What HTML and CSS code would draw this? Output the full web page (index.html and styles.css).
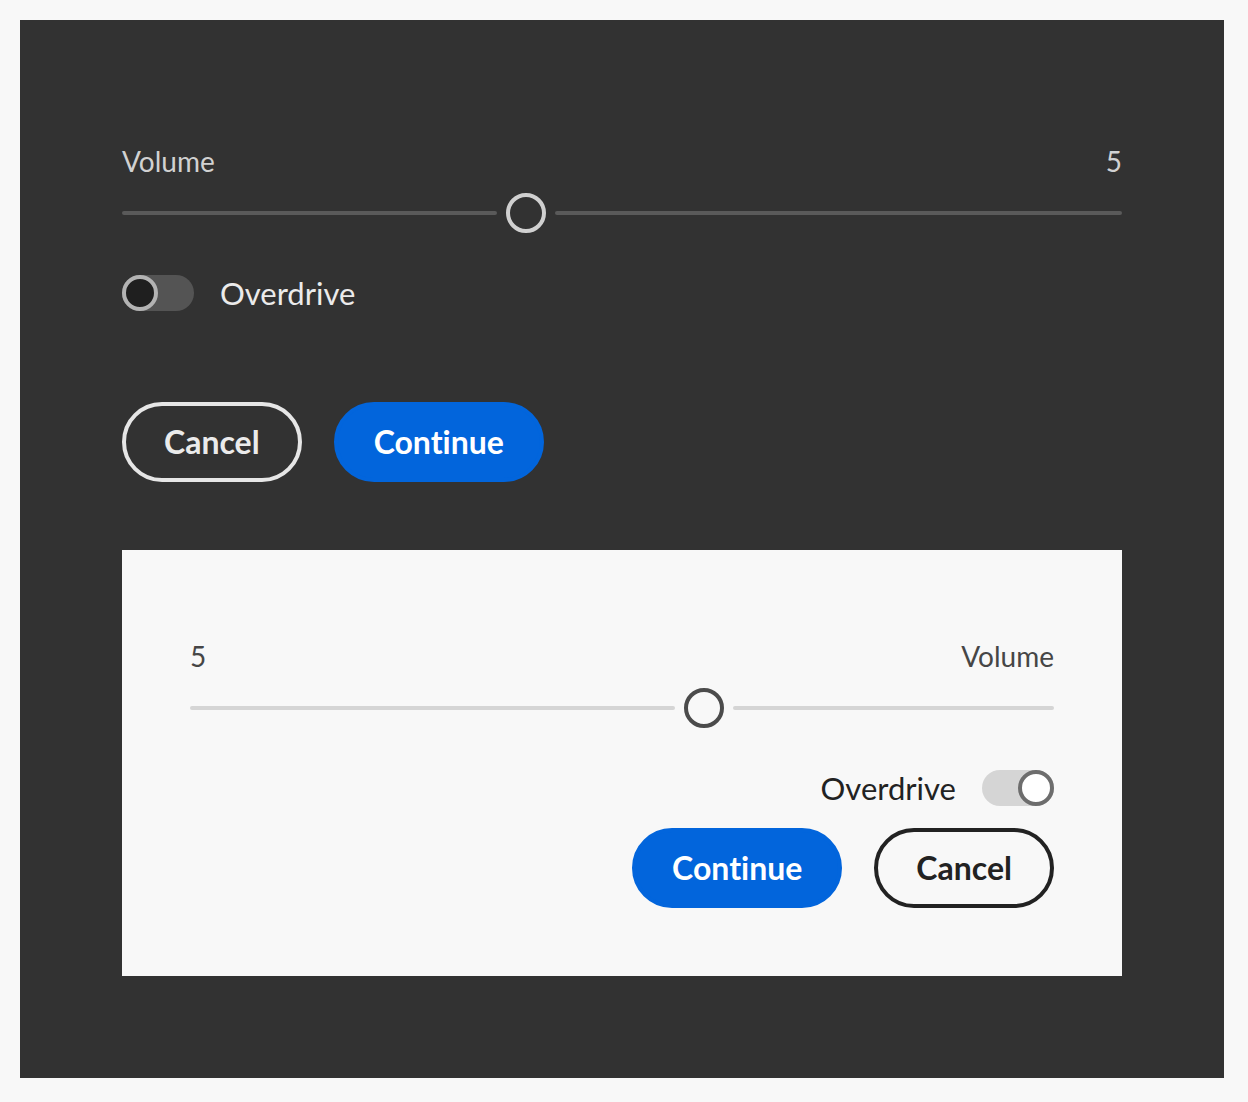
FILE: index.html
```html
<!DOCTYPE html>
<html lang="en">
<head>
<meta charset="utf-8">
<title>Volume settings</title>
<link rel="stylesheet" href="styles.css">
</head>
<body>
<main class="stage dark">
  <section class="panel">
    <div class="slider" style="--v:0.4">
      <div class="slider-labels">
        <span class="slider-label">Volume</span>
        <span class="slider-value">5</span>
      </div>
      <div class="slider-track">
        <span class="track track-fill"></span>
        <span class="thumb"></span>
        <span class="track track-rest"></span>
      </div>
    </div>
    <label class="switch">
      <span class="switch-track"><span class="switch-thumb"></span></span>
      <span class="switch-label">Overdrive</span>
    </label>
    <div class="actions actions-spaced">
      <button class="btn btn-secondary">Cancel</button>
      <button class="btn btn-accent">Continue</button>
    </div>
  </section>

  <section class="panel light" dir="rtl">
    <div class="slider" style="--v:0.4">
      <div class="slider-labels">
        <span class="slider-label">Volume</span>
        <span class="slider-value">5</span>
      </div>
      <div class="slider-track">
        <span class="track track-fill"></span>
        <span class="thumb"></span>
        <span class="track track-rest"></span>
      </div>
    </div>
    <label class="switch">
      <span class="switch-track"><span class="switch-thumb"></span></span>
      <span class="switch-label">Overdrive</span>
    </label>
    <div class="actions">
      <button class="btn btn-secondary">Cancel</button>
      <button class="btn btn-accent">Continue</button>
    </div>
  </section>
</main>
</body>
</html>
```

FILE: styles.css
```css
* { box-sizing: border-box; }

html, body {
  margin: 0;
  background: #f8f8f8;
}

body {
  padding: 20px 24px 24px 20px;
  font-family: Lato, "Open Sans", "Liberation Sans", sans-serif;
  font-variant-ligatures: none;
}

.stage {
  width: 1204px;
  padding: 102px;
  background: #323232;
}

.panel {
  display: flex;
  flex-direction: column;
}

/* ---------- slider ---------- */
.slider-labels {
  display: flex;
  justify-content: space-between;
  padding-top: 21px;
  font-size: 28px;
  line-height: 36px;
  color: #d1d1d1;
}

.slider-track {
  display: flex;
  align-items: center;
  height: 40px;
  margin-top: 14px;
}

.track {
  height: 4px;
  border-radius: 2px;
  background: #5a5a5a;
}

.track-fill {
  flex: none;
  width: calc((100% - 40px) * var(--v) - 9px);
}

.track-rest { flex: 1; }

.thumb {
  flex: none;
  width: 40px;
  height: 40px;
  margin: 0 9px;
  border-radius: 50%;
  border: 4px solid #d0d0d0;
  background: #323232;
}

/* ---------- switch ---------- */
.switch {
  display: flex;
  align-items: center;
  gap: 26px;
  margin-top: 42px;
  height: 36px;
}

.switch-track {
  display: flex;
  width: 72px;
  height: 36px;
  border-radius: 18px;
  background: #545454;
}

.switch-thumb {
  width: 36px;
  height: 36px;
  border-radius: 50%;
  border: 4px solid #b3b3b3;
  background: #1f1f1f;
}

.switch-label {
  font-size: 31px;
  line-height: 36px;
  color: #ebebeb;
}

/* ---------- buttons ---------- */
.actions {
  display: flex;
  gap: 32px;
  margin-top: 22px;
}

.actions-spaced { margin-top: 91px; }

.btn {
  height: 80px;
  padding: 0 38px;
  border-radius: 40px;
  border: 4px solid transparent;
  font-family: inherit;
  font-size: 32px;
  font-weight: 700;
  font-variant-ligatures: none;
  line-height: 1;
  cursor: pointer;
}

.btn-secondary {
  background: transparent;
  border-color: #e6e6e6;
  color: #ebebeb;
}

.btn-accent {
  padding: 0 36px;
  background: #0265dc;
  border-color: #0265dc;
  color: #ffffff;
}

/* ---------- light panel ---------- */
.light {
  margin-top: 68px;
  padding: 67px 68px 68px;
  background: #f8f8f8;
}

.light .slider-labels { color: #464646; }
.light .track { background: #d5d5d5; }
.light .thumb {
  background: #f8f8f8;
  border-color: #4b4b4b;
}
.light .switch-track { background: #d5d5d5; }
.light .switch-thumb {
  background: #ffffff;
  border-color: #6d6d6d;
}
.light .switch-label { color: #222222; }
.light .btn-secondary {
  border-color: #222222;
  color: #222222;
}
```
